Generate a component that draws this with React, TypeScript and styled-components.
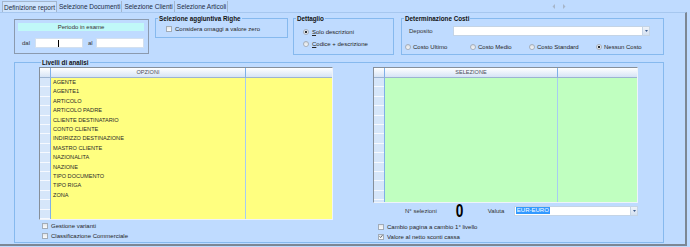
import styled, { createGlobalStyle } from 'styled-components';

const GlobalStyle = createGlobalStyle`
  html, body { margin: 0; padding: 0; }
  body {
    width: 690px;
    height: 247px;
    overflow: hidden;
    background: #bfdbff;
    font-family: "Liberation Sans", Arial, sans-serif;
    font-size: 6px;
    color: #1c1c1c;
  }
  * { box-sizing: border-box; }
`;

const options = [
  'AGENTE',
  'AGENTE1',
  'ARTICOLO',
  'ARTICOLO PADRE',
  'CLIENTE DESTINATARIO',
  'CONTO CLIENTE',
  'INDIRIZZO DESTINAZIONE',
  'MASTRO CLIENTE',
  'NAZIONALITA',
  'NAZIONE',
  'TIPO DOCUMENTO',
  'TIPO RIGA',
  'ZONA',
];

const tabs = ['Definizione report', 'Selezione Documenti', 'Selezione Clienti', 'Selezione Articoli'];

const Check = ({ checked }: { checked?: boolean }) => (
  <CheckBox>
    {checked && (
      <svg width="5" height="5" viewBox="0 0 5 5">
        <path d="M0.6 2.4 L2 3.8 L4.4 0.8" stroke="#303846" strokeWidth="0.9" fill="none" />
      </svg>
    )}
  </CheckBox>
);

const Combo = ({ width, value }: { width: number; value?: string }) => (
  <ComboBox style={{ width }}>
    <ComboText>{value && <Selected>{value}</Selected>}</ComboText>
    <ComboBtn>
      <svg width="3" height="2" viewBox="0 0 3 2">
        <path d="M0 0 H3 L1.5 2 Z" fill="#3c5c8c" />
      </svg>
    </ComboBtn>
  </ComboBox>
);

const App = () => {
  return (
    <>
      <GlobalStyle />
      <TabStrip>
        {tabs.map((t, i) => (
          <Tab key={t} $active={i === 0}>
            {t}
          </Tab>
        ))}
        <Nav>
          <svg width="14" height="5" viewBox="0 0 14 5">
            <path d="M3 0 L0.5 2.5 L3 5 Z" fill="#a7b6ca" />
            <path d="M11 0 L13.5 2.5 L11 5 Z" fill="#a7b6ca" />
          </svg>
        </Nav>
      </TabStrip>
      <Page>
        <TopRow>
          <PeriodBox>
            <PeriodHead>Periodo in esame</PeriodHead>
            <DateRow>
              <DateLabel $w={13}>dal</DateLabel>
              <DateInput>
                <Caret />
              </DateInput>
              <DateLabel $w={8} style={{ marginLeft: 5 }}>
                al
              </DateLabel>
              <DateInput />
            </DateRow>
          </PeriodBox>

          <Group $w={133} $h={23} $ml={6}>
            <Legend>Selezione aggiuntiva Righe</Legend>
            <Line $pl={10} $pt={2} $h={9}>
              <Check />
              <span>Considera omaggi a valore zero</span>
            </Line>
          </Group>

          <Group $w={101} $h={40} $ml={5}>
            <Legend>Dettaglio</Legend>
            <Line $pl={9} $pt={4} $h={12}>
              <Radio $on />
              <span>
                <u>S</u>olo descrizioni
              </span>
            </Line>
            <Line $pl={9} $h={12}>
              <Radio />
              <span>
                <u>C</u>odice + descrizione
              </span>
            </Line>
          </Group>

          <Group $w={263} $h={40} $ml={7}>
            <Legend>Determinazione Costi</Legend>
            <Line $pl={7} $pt={4} $h={10}>
              <FieldLabel $w={41}>Deposito</FieldLabel>
              <Combo width={197} />
            </Line>
            <Line $pl={3} $pt={6} $h={10}>
              <RadioItem $w={62}>
                <Radio />
                <span>Costo Ultimo</span>
              </RadioItem>
              <RadioItem $w={56}>
                <Radio />
                <span>Costo Medio</span>
              </RadioItem>
              <RadioItem $w={64}>
                <Radio />
                <span>Costo Standard</span>
              </RadioItem>
              <RadioItem $w={60}>
                <Radio $on />
                <span>Nessun Costo</span>
              </RadioItem>
            </Line>
          </Group>
        </TopRow>

        <Levels>
          <Legend>Livelli di analisi</Legend>
          <LevelsBody>
            <Column>
              <DataGrid $bg="#ffff80" $h={153} $col={196}>
                <HeadCell />
                <HeadCell $sep>OPZIONI</HeadCell>
                <HeadCell />
                <Selector />
                <Rows>
                  {options.map(o => (
                    <Row key={o}>{o}</Row>
                  ))}
                </Rows>
                <EmptyCol />
              </DataGrid>
              <CheckList $pl={3} $pt={1}>
                <Line $h={10}>
                  <Check />
                  <span>Gestione varianti</span>
                </Line>
                <Line $h={10}>
                  <Check />
                  <span>Classificazione Commerciale</span>
                </Line>
              </CheckList>
            </Column>

            <Column>
              <DataGrid $bg="#c0ffc0" $h={136} $col={174}>
                <HeadCell />
                <HeadCell $sep>SELEZIONE</HeadCell>
                <HeadCell />
                <Selector />
                <Rows />
                <EmptyCol />
              </DataGrid>
              <CountRow>
                <FieldLabel $w={50}>N° selezioni</FieldLabel>
                <Count>0</Count>
                <FieldLabel $w={26}>Valuta</FieldLabel>
                <Combo width={125} value="EUR-EURO" />
              </CountRow>
              <CheckList $pl={5} $pt={4}>
                <Line $h={10}>
                  <Check />
                  <span>Cambio pagina a cambio 1° livello</span>
                </Line>
                <Line $h={9}>
                  <Check checked />
                  <span>Valore al netto sconti cassa</span>
                </Line>
              </CheckList>
            </Column>
          </LevelsBody>
        </Levels>
      </Page>
    </>
  );
};

const TabStrip = styled.div`
  display: flex;
  align-items: flex-end;
  height: 12px;
  padding-left: 2px;
`;
const Tab = styled.div<{ $active?: boolean }>`
  height: 11px;
  line-height: 11px;
  padding: 0 1px 0 ${props => (props.$active ? 1 : 2)}px;
  font-size: 6.5px;
  color: #1e2c44;
  white-space: nowrap;
  border-right: 1px solid #a3b6ce;
  border-left: ${props => (props.$active ? '1px solid #a3b6ce' : 'none')};
  border-top: ${props => (props.$active ? '1px solid #a3b6ce' : 'none')};
  background: ${props => (props.$active ? '#cde3fd' : 'transparent')};
`;
const Nav = styled.div`
  margin-left: auto;
  margin-right: 124px;
  align-self: center;
  display: flex;
`;

const Page = styled.div`
  width: 687px;
  height: 234px;
  border-top: 1px solid #a6c7ef;
  border-right: 2px solid #7c8794;
  border-bottom: 2px solid #7c8794;
  padding: 2px 0 0 14px;
  display: flex;
  flex-direction: column;
  gap: 4px;
`;
const TopRow = styled.div`
  display: flex;
  align-items: flex-start;
  height: 40px;
`;

const PeriodBox = styled.div`
  margin-top: 4px;
  width: 135px;
  height: 35px;
  border: 1px solid #8b9aae;
  display: flex;
  flex-direction: column;
`;
const PeriodHead = styled.div`
  margin: 3px 4px 0 3px;
  height: 8px;
  line-height: 8px;
  background: #c0f8f8;
  text-align: center;
  color: #333;
`;
const DateRow = styled.div`
  display: flex;
  align-items: center;
  margin-top: 7px;
  padding-left: 7px;
  height: 10px;
`;
const DateLabel = styled.span<{ $w: number }>`
  width: ${props => props.$w}px;
  color: #333;
`;
const DateInput = styled.div`
  width: 48px;
  height: 10px;
  background: #fff;
  border: 1px solid #d3e0ef;
  display: flex;
  align-items: center;
`;
const Caret = styled.span`
  margin-left: 22px;
  width: 1px;
  height: 7px;
  background: #000;
`;

const Group = styled.fieldset<{ $w: number; $h: number; $ml: number }>`
  margin: 0 0 0 ${props => props.$ml}px;
  padding: 0;
  min-inline-size: 0;
  width: ${props => props.$w}px;
  height: ${props => props.$h}px;
  border: 1px solid #86b9ee;
`;
const Legend = styled.legend`
  margin-left: 2px;
  padding: 0 1px;
  height: 7px;
  line-height: 7px;
  font-size: 6.3px;
  font-weight: bold;
  color: #111;
`;
const Line = styled.div<{ $pl?: number; $pt?: number; $h: number }>`
  display: flex;
  align-items: center;
  gap: 3px;
  margin-top: ${props => props.$pt ?? 0}px;
  padding-left: ${props => props.$pl ?? 0}px;
  height: ${props => props.$h}px;
  color: #262626;
  white-space: nowrap;
`;
const FieldLabel = styled.span<{ $w: number }>`
  width: ${props => props.$w}px;
  flex-shrink: 0;
  color: #333;
`;
const RadioItem = styled.div<{ $w: number }>`
  width: ${props => props.$w}px;
  display: flex;
  align-items: center;
  gap: 2px;
`;
const Radio = styled.span<{ $on?: boolean }>`
  width: 6px;
  height: 6px;
  border-radius: 50%;
  border: 1px solid #a6afba;
  background: ${props =>
    props.$on
      ? 'radial-gradient(circle, #2a2f36 0 1.3px, #f4f5f7 1.6px)'
      : 'linear-gradient(#dadee3, #f7f8f9)'};
  flex-shrink: 0;
`;
const CheckBox = styled.span`
  width: 6px;
  height: 6px;
  border: 1px solid #a2acb8;
  background: linear-gradient(#e3e6ea, #fafbfc);
  display: flex;
  align-items: center;
  justify-content: center;
  flex-shrink: 0;
`;

const ComboBox = styled.div`
  height: 10px;
  background: #fff;
  border: 1px solid #c4d4e6;
  display: flex;
`;
const ComboText = styled.div`
  flex: 1;
  display: flex;
  align-items: center;
  padding-left: 1px;
`;
const Selected = styled.span`
  background: #3399ff;
  color: #fff;
  line-height: 7px;
  padding: 0 1px;
`;
const ComboBtn = styled.div`
  width: 7px;
  background: linear-gradient(#eef3fa, #d3e0f0);
  border-left: 1px solid #c4d4e6;
  display: flex;
  align-items: center;
  justify-content: center;
`;

const Levels = styled.fieldset`
  margin: 0;
  padding: 1px 0 0 24px;
  min-inline-size: 0;
  width: 650px;
  height: 184px;
  border: 1px solid #86b9ee;
`;
const LevelsBody = styled.div`
  display: grid;
  grid-template-columns: 294px 265px;
  column-gap: 40px;
`;
const Column = styled.div`
  display: flex;
  flex-direction: column;
`;

const DataGrid = styled.div<{ $bg: string; $h: number; $col: number }>`
  height: ${props => props.$h}px;
  display: grid;
  grid-template-columns: 10px ${props => props.$col}px 1fr;
  grid-template-rows: 10px 1fr;
  border-top: 1px solid #868f9a;
  border-left: 1px solid #868f9a;
  border-right: 1px solid #eef3fa;
  border-bottom: 1px solid #eef3fa;
  background: ${props => props.$bg};
  overflow: hidden;
`;
const HeadCell = styled.div<{ $sep?: boolean }>`
  background: linear-gradient(#ffffff, #d6e4f6);
  border-bottom: 1px solid #9cb4d2;
  border-left: ${props => (props.$sep ? '1px solid #7fb0e8' : 'none')};
  border-right: ${props => (props.$sep ? '1px solid #7fb0e8' : 'none')};
  text-align: center;
  line-height: 9px;
  font-size: 5.6px;
  color: #4a4f58;
`;
const Selector = styled.div`
  background: repeating-linear-gradient(
    to bottom,
    #d6e6fa 0,
    #d6e6fa 8.4px,
    #f6f9ff 8.4px,
    #f6f9ff 9.4px
  );
`;
const Rows = styled.div`
  border-left: 1px solid #7fb0e8;
  border-right: 1px solid #a6cdf2;
  display: flex;
  flex-direction: column;
`;
const Row = styled.div`
  height: 9.4px;
  line-height: 9.4px;
  padding-left: 2px;
  font-size: 5.6px;
  color: #2a2a2a;
`;
const EmptyCol = styled.div``;

const CheckList = styled.div<{ $pl: number; $pt: number }>`
  display: flex;
  flex-direction: column;
  padding-left: ${props => props.$pl}px;
  margin-top: ${props => props.$pt}px;
`;
const CountRow = styled.div`
  display: flex;
  align-items: center;
  height: 15px;
  padding-left: 32px;
  color: #333;
`;
const Count = styled.span`
  width: 33px;
  padding-left: 1px;
  font-size: 19px;
  font-weight: bold;
  line-height: 15px;
  color: #000;
  transform: scaleX(0.72);
  transform-origin: left center;
`;

export default App;
